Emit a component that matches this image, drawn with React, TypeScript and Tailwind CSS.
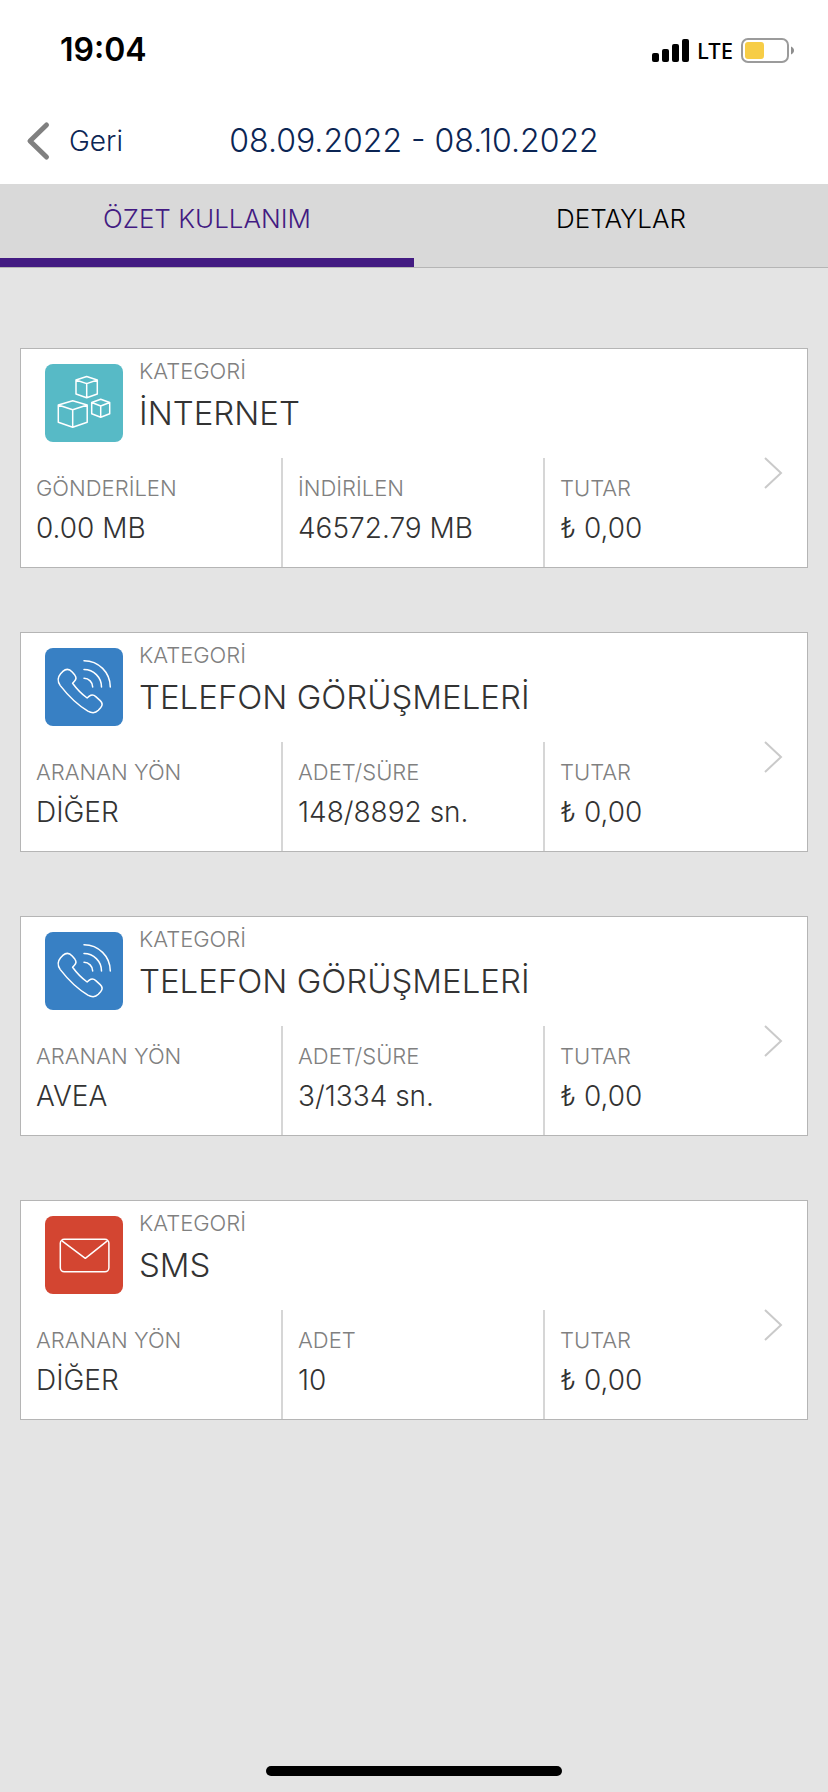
import React, { useState } from 'react';

type IconName = 'internet' | 'phone' | 'sms';
type Tab = 'summary' | 'details';

interface UsageItem {
    icon: IconName;
    title: string;
    columns: { label: string; value: string }[];
}

const usageItems: UsageItem[] = [
    {
        icon: 'internet',
        title: 'İNTERNET',
        columns: [
            { label: 'GÖNDERİLEN', value: '0.00 MB' },
            { label: 'İNDİRİLEN', value: '46572.79 MB' },
            { label: 'TUTAR', value: '₺ 0,00' },
        ],
    },
    {
        icon: 'phone',
        title: 'TELEFON GÖRÜŞMELERİ',
        columns: [
            { label: 'ARANAN YÖN', value: 'DİĞER' },
            { label: 'ADET/SÜRE', value: '148/8892 sn.' },
            { label: 'TUTAR', value: '₺ 0,00' },
        ],
    },
    {
        icon: 'phone',
        title: 'TELEFON GÖRÜŞMELERİ',
        columns: [
            { label: 'ARANAN YÖN', value: 'AVEA' },
            { label: 'ADET/SÜRE', value: '3/1334 sn.' },
            { label: 'TUTAR', value: '₺ 0,00' },
        ],
    },
    {
        icon: 'sms',
        title: 'SMS',
        columns: [
            { label: 'ARANAN YÖN', value: 'DİĞER' },
            { label: 'ADET', value: '10' },
            { label: 'TUTAR', value: '₺ 0,00' },
        ],
    },
];

const iconColors: Record<IconName, string> = {
    internet: 'bg-[#57bac6]',
    phone: 'bg-[#3880c4]',
    sms: 'bg-[#d34531]',
};

const CategoryIcon: React.FC<{ name: IconName }> = ({ name }) => (
    <div className={`size-[78px] shrink-0 rounded-lg ${iconColors[name]}`}>
        <svg viewBox="0 0 78 78" className="size-full" fill="none" stroke="white" strokeWidth="1.5" strokeLinejoin="round" strokeLinecap="round" aria-hidden="true">
            {name === 'internet' && (
                <>
                    <path d="M41.7 12.5 52.3 16v14L41.7 33.7 31 30V16ZM31 16l10.7 3.6L52.3 16M41.7 19.6v14" />
                    <path d="M27.7 36.7 42.2 41v17.3l-14.5 5-14.4-5V41ZM13.3 41l14.4 4.8L42.2 41M27.7 45.8v17.5" />
                    <path d="m55.7 35.3 9 3.2v11.2l-9 3.6-9-3.6V38.5ZM46.7 38.5l9 3.5 9-3.5M55.7 42v11.3" />
                </>
            )}
            {name === 'phone' && (
                <>
                    <path d="M39 12.7A26.3 26.3 0 0 1 65.3 39M39 21.5A17.5 17.5 0 0 1 56.5 39M39 30.3a8.7 8.7 0 0 1 8.7 8.7" />
                    <path d="M17.8 23.4c3.4-2.9 6.6-2.5 9.4.6l2.6 3.1c2 2.5 1.5 4.4-.6 6.4l-1.6 1.8c3.9 5.4 8.8 10.6 14.5 14.7l2.2-1.8c1.9-1.5 4.4-1.5 6.5.4l4.4 4c2.2 2 2.4 4.8.4 7.2l-2.3 2.5c-2.7 2.8-6.3 3.1-10.4.8C32 56.6 22.6 47 15.3 37.6c-2.9-4-2.6-8.4.3-11.8Z" />
                </>
            )}
            {name === 'sms' && (
                <>
                    <rect x="15.3" y="23.3" width="48.6" height="32.5" rx="4" />
                    <path d="m17 24.8 23.3 17.5 22-17.5" />
                </>
            )}
        </svg>
    </div>
);

const StatusBar: React.FC = () => (
    <div className="flex h-[100px] items-center justify-between pl-[60px] pr-[34px] text-black">
        <span className="text-[32px] leading-10 font-semibold">19:04</span>
        <div className="flex items-center gap-2">
            <svg viewBox="0 0 37 23" className="h-[23px] w-[37px]" aria-hidden="true">
                <rect x="0" y="14" width="7" height="9" rx="2" />
                <rect x="10" y="10" width="7" height="13" rx="2" />
                <rect x="20" y="5" width="7" height="18" rx="2" />
                <rect x="30" y="0" width="7" height="23" rx="2" />
            </svg>
            <span className="font-['Noto_Sans',sans-serif] text-[22px] leading-8 font-medium">LTE</span>
            <svg viewBox="0 0 53 25" className="h-[25px] w-[53px]" aria-hidden="true">
                <rect x="1" y="1" width="46" height="23" rx="6" fill="none" stroke="#9b9b9b" strokeWidth="2" />
                <rect x="4" y="4" width="19" height="17" rx="3" fill="#f7cd46" />
                <path d="M50 8.5c4 1.5 4 6.5 0 8Z" fill="#8e8e8e" />
            </svg>
        </div>
    </div>
);

const UsageCard: React.FC<{ item: UsageItem }> = ({ item }) => (
    <article className="relative border border-[#b5b5b5] bg-white">
        <div className="flex gap-4 pb-4 pl-6">
            <div className="pt-[15px]">
                <CategoryIcon name={item.icon} />
            </div>
            <div className="pt-1.5">
                <p className="text-[22px] leading-8 text-[#808080]">KATEGORİ</p>
                <h2 className="mt-1.5 text-[33px] leading-10 text-[#333333]">{item.title}</h2>
            </div>
        </div>
        <dl className="grid grid-cols-3">
            {item.columns.map((column) => (
                <div key={column.label} className="border-r-2 border-[#d6d6d6] pt-3.5 pb-[21px] pl-[15px] last:border-r-0">
                    <dt className="text-[22px] leading-8 text-[#808080]">{column.label}</dt>
                    <dd className="mt-1.5 text-[28px] leading-9 text-[#333333]">{column.value}</dd>
                </div>
            ))}
        </dl>
        <button type="button" aria-label={item.title} className="absolute top-[107px] right-6">
            <svg viewBox="0 0 20 34" className="h-[34px] w-5" fill="none" stroke="#cacaca" strokeWidth="2" aria-hidden="true">
                <path d="m2 2 16 15L2 32" />
            </svg>
        </button>
    </article>
);

const App: React.FC = () => {
    const [tab, setTab] = useState<Tab>('summary');

    const tabClass = (name: Tab) =>
        `border-b-[9px] pt-[17px] pb-[21px] text-[26px] leading-9 ${tab === name ? 'border-[#431b82] text-[#431b82]' : 'border-transparent text-black'}`;

    return (
        <div className="flex min-h-screen flex-col bg-[#e4e4e4] font-['Inter',sans-serif] font-light">
            <header className="bg-white">
                <StatusBar />
                <div className="grid h-[84px] grid-cols-[1fr_auto_1fr] items-center pb-0.5 text-[#0b2554]">
                    <button type="button" className="flex items-center gap-[18px] pl-[26px] text-[28px] leading-9">
                        <svg viewBox="0 0 25 40" className="h-10 w-[25px]" fill="none" stroke="#808080" strokeWidth="5" strokeLinecap="round" strokeLinejoin="round" aria-hidden="true">
                            <path d="M20.5 4 4 20l16.5 16" />
                        </svg>
                        Geri
                    </button>
                    <h1 className="text-[32px] leading-10">08.09.2022 - 08.10.2022</h1>
                </div>
            </header>

            <nav className="grid grid-cols-2 border-b border-[#b5b5b5] bg-[#d9d9d9]">
                <button type="button" className={tabClass('summary')} onClick={() => setTab('summary')}>
                    ÖZET KULLANIM
                </button>
                <button type="button" className={tabClass('details')} onClick={() => setTab('details')}>
                    DETAYLAR
                </button>
            </nav>

            <main className="flex flex-col gap-16 px-5 pt-20 pb-16">
                {usageItems.map((item, index) => (
                    <UsageCard key={index} item={item} />
                ))}
            </main>

            <div className="mx-auto mt-auto mb-4 h-2.5 w-[296px] rounded-full bg-black" />
        </div>
    );
};

export default App;
